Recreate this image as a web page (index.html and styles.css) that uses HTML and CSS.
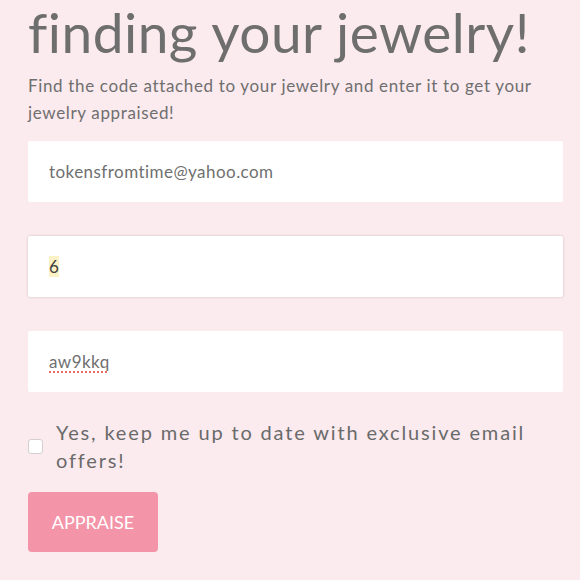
FILE: index.html
```html
<!DOCTYPE html>
<html>
<head>
<meta charset="utf-8">
<link rel="stylesheet" href="styles.css">
</head>
<body>
<main class="page">
  <h1 class="title">Congrats on<br>finding your jewelry!</h1>
  <p class="intro">Find the code attached to your jewelry and enter it to get your jewelry appraised!</p>
  <form class="form">
    <div class="field"><span class="value">tokensfromtime@yahoo.com</span></div>
    <div class="field field-focus"><span class="value value-hl">6</span></div>
    <div class="field field-last"><span class="value value-spell">aw9kkq</span></div>
    <label class="check">
      <span class="box"></span>
      <span class="check-text">Yes, keep me up to date with exclusive email offers!</span>
    </label>
    <div class="actions"><span class="btn">APPRAISE</span></div>
  </form>
</main>
</body>
</html>
```

FILE: styles.css
```css
html, body {
  margin: 0;
  padding: 0;
  background: #fbeaee;
  overflow: hidden;
}
.page {
  padding: 0 17px 0 28px;
  font-family: "Lato", "Liberation Sans", sans-serif;
  color: #6f6f6f;
}
.title {
  margin: -64px 0 0 0;
  font-size: 55px;
  font-weight: 400;
  line-height: 64px;
  letter-spacing: 0.5px;
  color: #6e6e6e;
}
.intro {
  margin: 8px 0 0 0;
  font-size: 17px;
  line-height: 27px;
  letter-spacing: 0.65px;
  color: #6f6f6f;
}
.form {
  margin-top: 15px;
  display: flex;
  flex-direction: column;
}
.field {
  height: 61px;
  background: #fff;
  border-radius: 2px;
  display: flex;
  align-items: center;
  padding-left: 21px;
  margin-bottom: 34px;
  box-sizing: border-box;
}
.field-last {
  margin-bottom: 0;
}
.field-focus {
  box-shadow: 0 0 3px rgba(0,0,0,0.18);
}
.value {
  font-size: 17px;
  letter-spacing: 0.45px;
  color: #6f6f6f;
}
.value-hl {
  background: #fdf2c6;
  color: #3f3f3f;
}
.value-spell {
  text-decoration: underline dotted #e0524f;
  text-underline-offset: 4px;
}
.check {
  display: flex;
  align-items: center;
  gap: 13px;
  margin-top: 26px;
}
.box {
  width: 13px;
  height: 13px;
  flex: none;
  background: #fff;
  border: 1px solid #d4d0d1;
  border-radius: 3px;
}
.check-text {
  font-size: 20px;
  line-height: 28px;
  letter-spacing: 1.85px;
  color: #6a6a6a;
}
.actions {
  margin-top: 18px;
}
.btn {
  display: inline-flex;
  align-items: center;
  justify-content: center;
  width: 130px;
  height: 60px;
  background: #f494a8;
  border-radius: 4px;
  color: #fff;
  font-size: 18px;
}
```
